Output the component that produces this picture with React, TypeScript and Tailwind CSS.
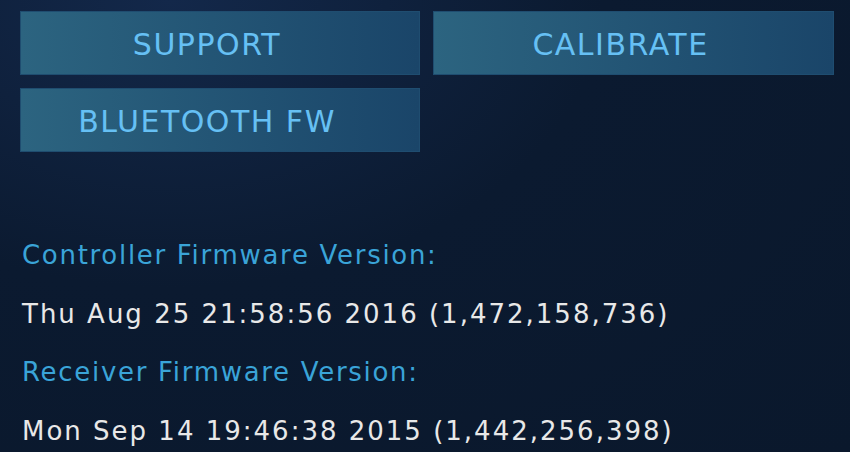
import React from "react";

const Btn = ({ label }: { label: string }) => (
  <div className="h-[64px] flex items-center justify-center pr-[26px] pt-[3px] border border-[#1f4d70] bg-gradient-to-r from-[#2c6480] to-[#1a4569] text-[#66c0f4] text-[30px] tracking-[1.5px]">
    {label}
  </div>
);

export default function App() {
  return (
    <div
      className="w-[850px] h-[452px] overflow-hidden bg-[#0b1a30] bg-[radial-gradient(ellipse_at_20%_0%,#13284a_0%,#0b1a30_45%,#0a182c_100%)] pt-[11px] pl-[20px]"
      style={{ fontFamily: '"DejaVu Sans", sans-serif' }}
    >
      <div className="grid grid-cols-[400px_401px] gap-[13px]">
        <Btn label="SUPPORT" />
        <Btn label="CALIBRATE" />
        <Btn label="BLUETOOTH FW" />
      </div>
      <div className="mt-[74px] pl-[2px] text-[26px] leading-[58.5px]">
        <div className="text-[#3aa4d8] tracking-[1.7px]">Controller Firmware Version:</div>
        <div className="text-[#e8e8e8] tracking-[2px]">Thu Aug 25 21:58:56 2016 (1,472,158,736)</div>
        <div className="text-[#3aa4d8] tracking-[1.7px]">Receiver Firmware Version:</div>
        <div className="text-[#e8e8e8] tracking-[2px]">Mon Sep 14 19:46:38 2015 (1,442,256,398)</div>
      </div>
    </div>
  );
}
